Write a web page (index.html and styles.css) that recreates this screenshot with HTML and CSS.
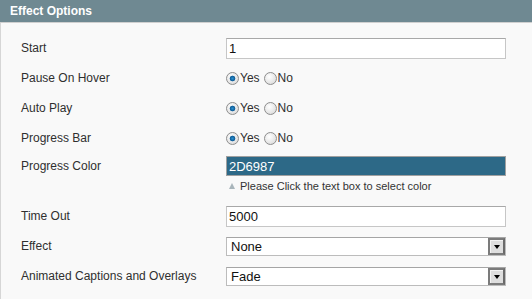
FILE: index.html
```html
<!DOCTYPE html>
<html>
<head>
<meta charset="utf-8">
<link rel="stylesheet" href="styles.css">
</head>
<body>
<div class="panel">
  <div class="head">Effect Options</div>
  <div class="body">
    <div class="row">
      <label class="lbl">Start</label>
      <div class="field"><input class="text" type="text" value="1"></div>
    </div>
    <div class="row">
      <label class="lbl">Pause On Hover</label>
      <div class="field radios">
        <label class="opt"><input class="radio" type="radio" name="p" checked>Yes</label>
        <label class="opt"><input class="radio" type="radio" name="p">No</label>
      </div>
    </div>
    <div class="row">
      <label class="lbl">Auto Play</label>
      <div class="field radios">
        <label class="opt"><input class="radio" type="radio" name="a" checked>Yes</label>
        <label class="opt"><input class="radio" type="radio" name="a">No</label>
      </div>
    </div>
    <div class="row">
      <label class="lbl">Progress Bar</label>
      <div class="field radios">
        <label class="opt"><input class="radio" type="radio" name="b" checked>Yes</label>
        <label class="opt"><input class="radio" type="radio" name="b">No</label>
      </div>
    </div>
    <div class="row row-color">
      <label class="lbl">Progress Color</label>
      <div class="field">
        <input class="text color" type="text" value="2D6987">
        <div class="hint"><span class="tri"></span>Please Click the text box to select color</div>
      </div>
    </div>
    <div class="row">
      <label class="lbl">Time Out</label>
      <div class="field"><input class="text" type="text" value="5000"></div>
    </div>
    <div class="row">
      <label class="lbl">Effect</label>
      <div class="field">
        <div class="select"><span class="val">None</span><span class="arrow"></span></div>
      </div>
    </div>
    <div class="row">
      <label class="lbl">Animated Captions and Overlays</label>
      <div class="field">
        <div class="select"><span class="val">Fade</span><span class="arrow"></span></div>
      </div>
    </div>
  </div>
</div>
</body>
</html>
```
FILE: styles.css
```css
html, body {
  margin: 0;
  padding: 0;
  background: #f9f9f9;
}
body {
  font-family: "Liberation Sans", Arial, sans-serif;
  font-size: 12px;
  color: #2f2f2f;
}
.panel {
  width: 532px;
  height: 299px;
  overflow: hidden;
}
.head {
  height: 22px;
  background: #6f8992;
  border-bottom: 1px solid #d0d0d0;
  color: #fff;
  font-weight: bold;
  font-size: 12px;
  line-height: 22px;
  padding-left: 10px;
}
.body {
  border-left: 1px solid #d6d6d6;
  padding-top: 10px;
  height: 276px;
}
.row {
  display: grid;
  grid-template-columns: 225px 280px;
  align-items: center;
  height: 30px;
}
.lbl {
  padding-left: 20px;
}
.text {
  box-sizing: border-box;
  width: 280px;
  height: 21px;
  margin: 0;
  border: 1px solid #c6c6c6;
  border-top-color: #a8a8a8;
  background: #fff;
  font-family: "Liberation Sans", Arial, sans-serif;
  font-size: 13px;
  color: #111;
  padding: 1px 2px 0;
  outline: none;
}
.radios {
  display: flex;
  align-items: center;
  gap: 4px;
}
.opt {
  display: inline-flex;
  align-items: center;
  font-size: 12px;
  color: #2f2f2f;
}
.radio {
  appearance: none;
  -webkit-appearance: none;
  box-sizing: border-box;
  width: 13px;
  height: 13px;
  margin: 0 1px 0 0;
  border-radius: 50%;
  border: 1px solid #8e8e8e;
  background: radial-gradient(circle at 40% 35%, #ffffff 0%, #e6e6e6 60%, #cfcfcf 100%);
}
.radio:checked {
  background:
    radial-gradient(circle at 50% 50%, #2a8fd0 0, #0f5c96 2.5px, transparent 3.2px),
    radial-gradient(circle at 40% 35%, #ffffff 0%, #e6e6e6 60%, #cfcfcf 100%);
}
.row-color {
  height: 45px;
  align-items: start;
  padding-top: 3px;
  padding-bottom: 0;
}
.row-color .lbl {
  line-height: 20px;
}
.text.color {
  height: 20px;
  background: #2d6987;
  color: #fff;
  border: 1px solid #a0a0a0;
}
.hint {
  display: flex;
  align-items: center;
  margin-top: 4px;
  font-size: 11px;
  color: #333;
  padding-left: 3px;
}
.tri {
  width: 0;
  height: 0;
  border-left: 3.5px solid transparent;
  border-right: 3.5px solid transparent;
  border-bottom: 6px solid #a9b5bb;
  margin-right: 5px;
}
.select {
  box-sizing: border-box;
  width: 280px;
  height: 19px;
  display: flex;
  align-items: stretch;
  border: 1px solid #bcbcbc;
  border-top-color: #a5a5a5;
  background: #fff;
}
.val {
  flex: 1;
  font-size: 13px;
  line-height: 17px;
  padding-left: 4px;
  color: #111;
}
.arrow {
  box-sizing: border-box;
  width: 17px;
  border: 2px solid #7b7b7b;
  border-right-color: #6a6a6a;
  background: #dedede;
  box-shadow: inset 1px 1px 0 #f4f4f4;
  display: flex;
  align-items: center;
  justify-content: center;
}
.arrow::after {
  content: "";
  width: 0;
  height: 0;
  border-left: 3.5px solid transparent;
  border-right: 3.5px solid transparent;
  border-top: 4px solid #000;
  margin-top: 1px;
}
```
